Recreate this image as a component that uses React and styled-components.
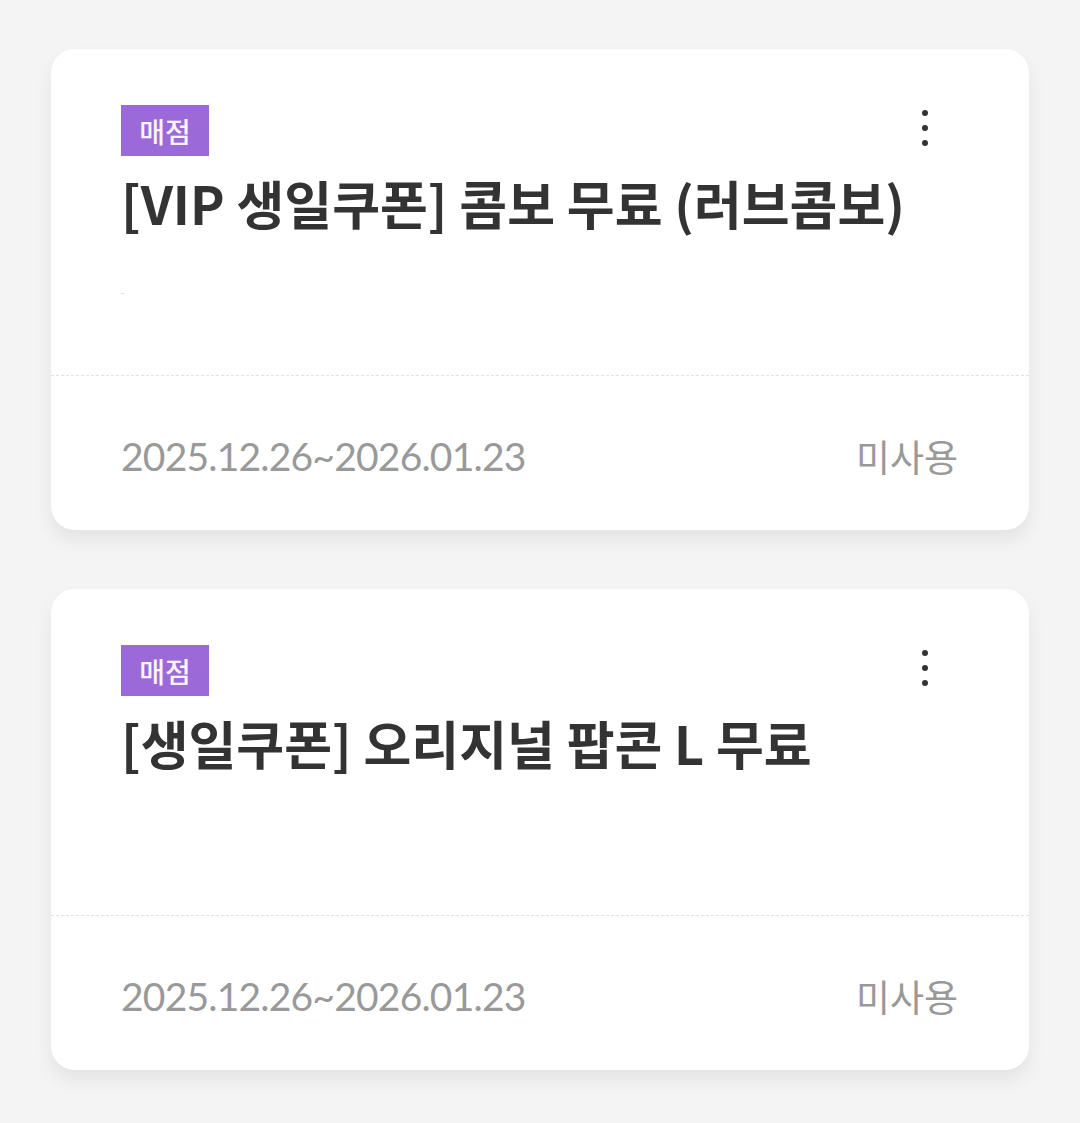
import React from "react";
import styled, { createGlobalStyle } from "styled-components";

const GlobalStyle = createGlobalStyle`
  html, body {
    margin: 0;
    padding: 0;
    background: #f4f4f4;
  }
  body {
    font-family: Lato, "Noto Sans CJK KR", sans-serif;
  }
`;

const Page = styled.div`
  display: flex;
  flex-direction: column;
  gap: 59px;
  padding: 49px 51px 53px;
  min-height: 1123px;
  box-sizing: border-box;
  background: #f4f4f4;
`;

const Card = styled.div`
  background: #fff;
  border-radius: 24px;
  box-shadow: 0 10px 18px rgba(0, 0, 0, 0.07);
  overflow: hidden;
`;

const Top = styled.div`
  position: relative;
  height: 327px;
  padding: 56px 70px 0;
  box-sizing: border-box;
  border-bottom: 1px dashed #e2e2e2;
`;

const Badge = styled.span`
  display: inline-flex;
  align-items: center;
  justify-content: center;
  width: 88px;
  height: 51px;
  background: #9b6ad8;
  color: #fbf3ff;
  font-family: "Noto Sans CJK KR", sans-serif;
  font-size: 28px;
  font-weight: 500;
`;

const Title = styled.h2`
  margin: 14px 0 0;
  font-family: "Noto Sans CJK KR", sans-serif;
  font-size: 52px;
  font-weight: 700;
  letter-spacing: 0;
  line-height: 1.25;
  color: #333;
`;

const Sub = styled.p`
  margin: 58px 0 0;
  width: 3px;
  height: 1px;
  background: #ddd;
`;

const Menu = styled.button`
  position: absolute;
  top: 57px;
  right: 97px;
  display: flex;
  flex-direction: column;
  align-items: center;
  gap: 9px;
  padding: 4px;
  border: none;
  background: none;
`;

const Dot = styled.span`
  width: 6px;
  height: 6px;
  border-radius: 50%;
  background: #333;
`;

const Bottom = styled.div`
  display: flex;
  align-items: center;
  justify-content: space-between;
  height: 154px;
  padding: 6px 71px 0 70px;
  box-sizing: border-box;
`;

const Period = styled.span`
  font-family: Lato, sans-serif;
  font-size: 39px;
  letter-spacing: -0.8px;
  color: #999;
`;

const Status = styled.span`
  font-family: "Noto Sans CJK KR", sans-serif;
  font-size: 37px;
  font-weight: 400;
  color: #999;
`;

const coupons = [
  { id: 1, type: "매점", title: "[VIP 생일쿠폰] 콤보 무료 (러브콤보)", sub: true },
  { id: 2, type: "매점", title: "[생일쿠폰] 오리지널 팝콘 L 무료", sub: false },
];

function CouponCard({ type, title, sub }) {
  return (
    <Card>
      <Top>
        <Badge>{type}</Badge>
        <Title>{title}</Title>
        {sub && <Sub />}
        <Menu aria-label="more">
          <Dot />
          <Dot />
          <Dot />
        </Menu>
      </Top>
      <Bottom>
        <Period>2025.12.26~2026.01.23</Period>
        <Status>미사용</Status>
      </Bottom>
    </Card>
  );
}

export default function App() {
  return (
    <>
      <GlobalStyle />
      <Page>
        {coupons.map((c) => (
          <CouponCard key={c.id} {...c} />
        ))}
      </Page>
    </>
  );
}
